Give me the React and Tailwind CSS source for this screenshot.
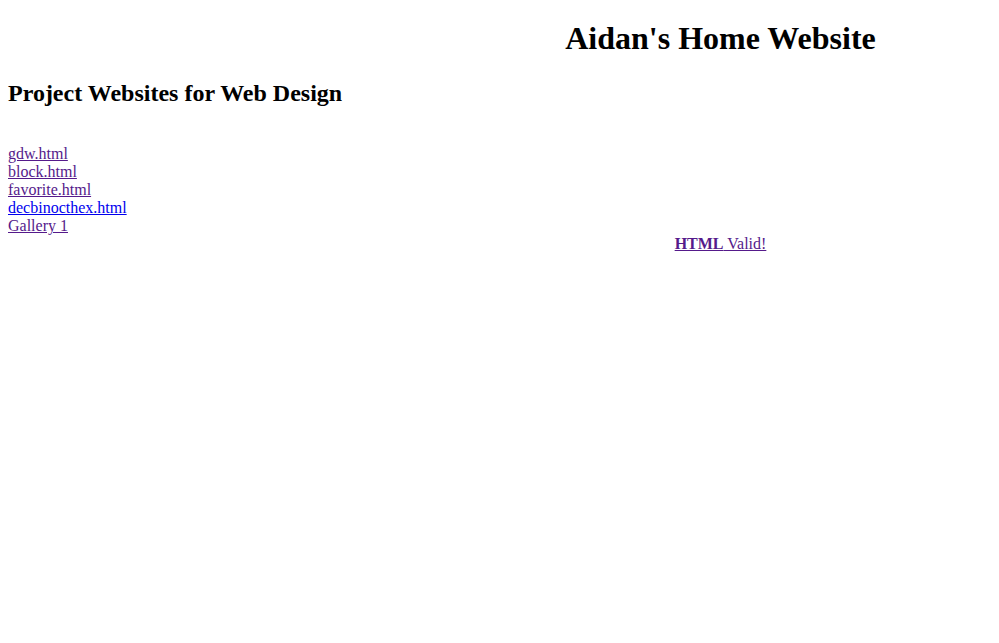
import React from "react";

const links = [
  { label: "gdw.html", visited: true },
  { label: "block.html", visited: true },
  { label: "favorite.html", visited: true },
  { label: "decbinocthex.html", visited: false },
  { label: "Gallery 1", visited: true },
];

const App = () => {
  return (
    <div className="min-h-screen bg-white px-2 font-['Liberation_Serif',serif] text-[16px] leading-[normal] text-black">
      <h1 className="mt-[19.5px] mb-[23.4px] pl-[442px] text-center text-[32px] leading-[normal] font-bold">
        Aidan's Home Website
      </h1>

      <h2 className="mb-[19.92px] text-[24px] leading-[normal] font-bold">
        Project Websites for Web Design
      </h2>

      <div className="h-[18.4px]" />

      {/* project links */}
      <div className="flex flex-col items-start">
        {links.map(l => (
          <a
            key={l.label}
            href="#"
            className={`underline ${l.visited ? "text-[#551A8B]" : "text-[#0000EE]"}`}
          >
            {l.label}
          </a>
        ))}
      </div>

      <div className="pl-[442px] text-center">
        <a href="#" className="underline text-[#551A8B]">
          <b>HTML</b> Valid!
        </a>
      </div>
    </div>
  );
};

export default App;
